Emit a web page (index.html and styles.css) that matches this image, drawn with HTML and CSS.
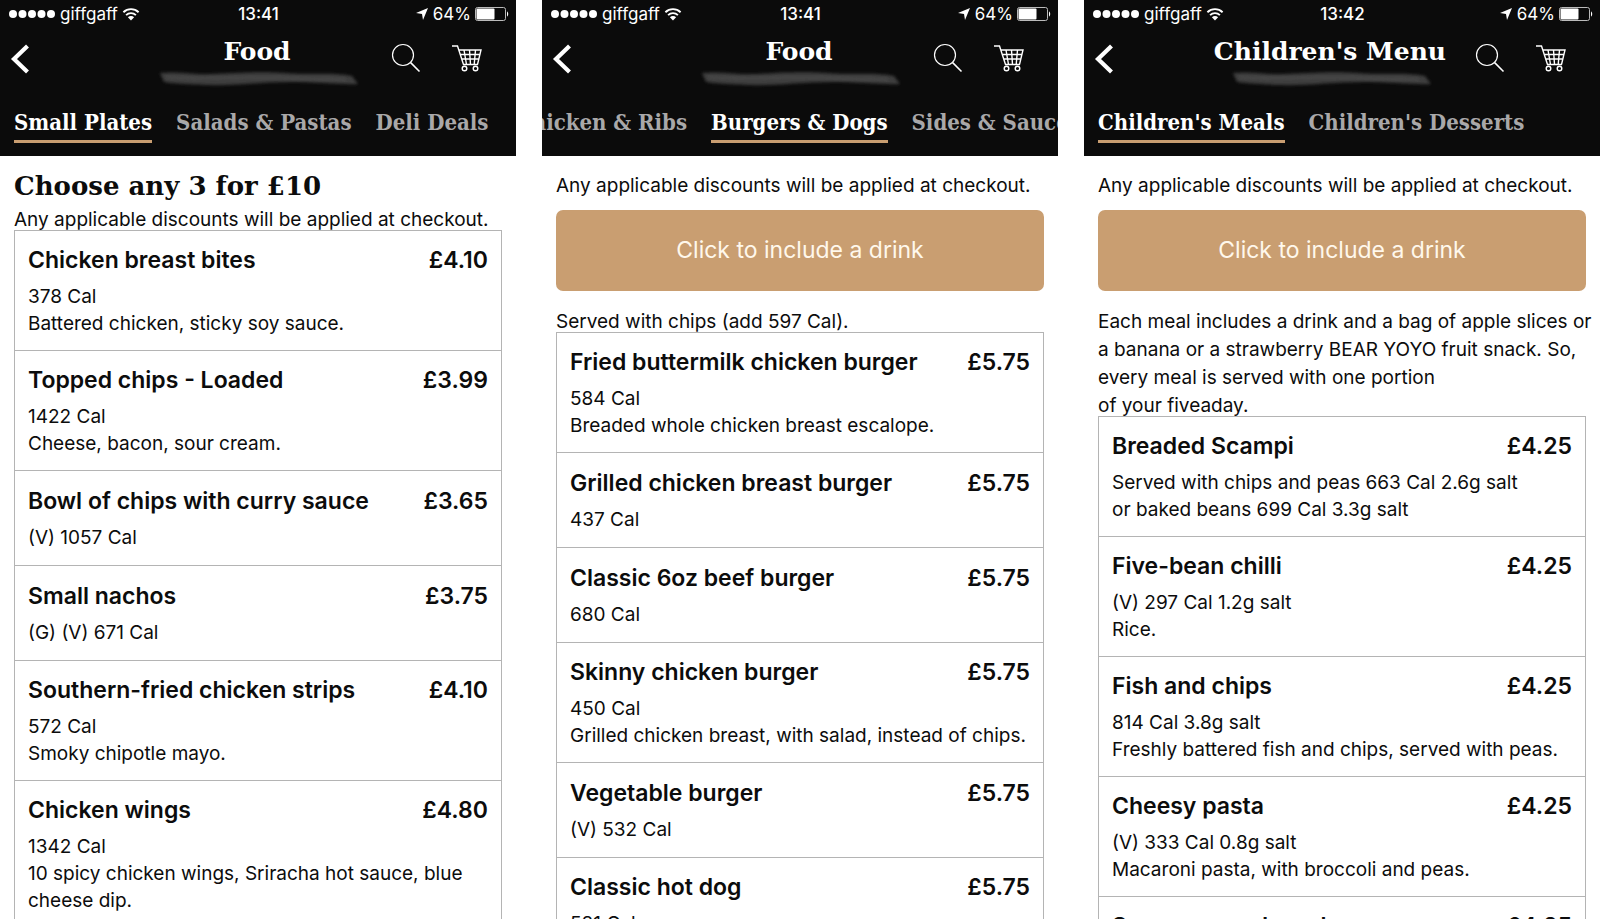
FILE: index.html
```html
<!DOCTYPE html>
<html lang="en">
<head>
    <meta charset="UTF-8">
    <meta name="viewport" content="width=device-width, initial-scale=1">
    <title>Food menu</title>
    <link rel="stylesheet" href="styles.css">
</head>
<body>
<svg class="sprite" aria-hidden="true">
    <symbol id="icon-signal" viewBox="0 0 48 10">
        <circle cx="5" cy="5" r="4"/><circle cx="14.5" cy="5" r="4"/><circle cx="24" cy="5" r="4"/><circle cx="33.5" cy="5" r="4"/><circle cx="43" cy="5" r="4"/>
    </symbol>
    <symbol id="icon-wifi" viewBox="0 0 18 14">
        <path d="M1.4 5.2a11 11 0 0 1 15.2 0M4.1 8.1a7 7 0 0 1 9.8 0" fill="none" stroke="currentColor" stroke-width="1.9"/>
        <path d="M9 13.4 5.9 10.2a4.4 4.4 0 0 1 6.2 0z"/>
    </symbol>
    <symbol id="icon-location" viewBox="0 0 14 14">
        <path d="M13 1 8 13 7 7 1 6z"/>
    </symbol>
    <symbol id="icon-battery" viewBox="0 0 34 14">
        <rect x=".5" y=".5" width="30" height="13" rx="2" fill="none" stroke="#bbb"/>
        <rect x="1.5" y="1.5" width="18" height="11" rx="1"/>
        <path d="M32 4.5c1.6.6 1.6 4.4 0 5z"/>
    </symbol>
    <symbol id="icon-back" viewBox="0 0 20 30">
        <path d="M17.5 2 4 15l13.5 13" fill="none" stroke="currentColor" stroke-width="4.2"/>
    </symbol>
    <symbol id="icon-search" viewBox="0 0 30 30">
        <circle cx="12" cy="12" r="10.5" fill="none" stroke="currentColor" stroke-width="1.2"/>
        <path d="M19.4 19.4 28.5 28.5" fill="none" stroke="currentColor" stroke-width="1.6"/>
    </symbol>
    <symbol id="icon-cart" viewBox="0 0 32 28">
        <path d="M1 2h5.500l6 18.500h14.500M7.700 6H30l-3.500 14.500M9.200 10.500H29M10.700 15H28M13 6l2.500 14.500M18.500 6l1 14.500M24.500 6l-1.300 14.500" fill="none" stroke="currentColor" stroke-width="1.4"/>
        <circle cx="13.5" cy="24.5" r="2.3" fill="none" stroke="currentColor" stroke-width="1.4"/>
        <circle cx="24.5" cy="24.5" r="2.3" fill="none" stroke="currentColor" stroke-width="1.4"/>
    </symbol>
    <symbol id="smudge" viewBox="0 0 210 22">
        <path d="M8 5c18-2 34 2 52 1s50-3 74-1 48-1 66 3l6 8c-14 1-42-2-68-2s-60 4-84 3-28-1-42-3z" fill="#3d3d3d" filter="url(#soft)"/>
        <path d="M14 9c40 4 80-1 120 1s46 0 60 2" fill="none" stroke="#4c4c4c" stroke-width="2" filter="url(#soft)"/>
    </symbol>
    <filter id="soft" x="-10%" y="-50%" width="120%" height="200%"><feGaussianBlur stdDeviation="1.8"/></filter>
</svg>

<main class="screens">
    <section class="screen">
        <header class="header">
            <div class="status">
                <div class="status-left">
                    <svg class="signal"><use href="#icon-signal"/></svg>
                    <span>giffgaff</span>
                    <svg class="wifi"><use href="#icon-wifi"/></svg>
                </div>
                <time class="clock">13:41</time>
                <div class="status-right">
                    <svg class="location"><use href="#icon-location"/></svg>
                    <span>64%</span>
                    <svg class="battery"><use href="#icon-battery"/></svg>
                </div>
            </div>
            <div class="navbar">
                <button class="icon-btn" aria-label="Back"><svg class="back"><use href="#icon-back"/></svg></button>
                <div class="title">
                    <h1>Food</h1>
                    <svg class="smudge"><use href="#smudge"/></svg>
                </div>
                <div class="actions">
                    <button class="icon-btn" aria-label="Search"><svg class="search"><use href="#icon-search"/></svg></button>
                    <button class="icon-btn" aria-label="Basket"><svg class="cart"><use href="#icon-cart"/></svg></button>
                </div>
            </div>
            <nav class="tabs">
                <a class="tab active" href="#small-plates">Small Plates</a>
                <a class="tab" href="#salads">Salads &amp; Pastas</a>
                <a class="tab" href="#deli">Deli Deals</a>
            </nav>
        </header>
        <div class="content">
            <h2>Choose any 3 for £10</h2>
            <p class="note">Any applicable discounts will be applied at checkout.</p>
            <ul class="menu">
                <li class="item">
                    <div class="item-top"><h3>Chicken breast bites</h3><span class="price">£4.10</span></div>
                    <p>378 Cal<br>Battered chicken, sticky soy sauce.</p>
                </li>
                <li class="item">
                    <div class="item-top"><h3>Topped chips - Loaded</h3><span class="price">£3.99</span></div>
                    <p>1422 Cal<br>Cheese, bacon, sour cream.</p>
                </li>
                <li class="item">
                    <div class="item-top"><h3>Bowl of chips with curry sauce</h3><span class="price">£3.65</span></div>
                    <p>(V) 1057 Cal</p>
                </li>
                <li class="item">
                    <div class="item-top"><h3>Small nachos</h3><span class="price">£3.75</span></div>
                    <p>(G) (V) 671 Cal</p>
                </li>
                <li class="item">
                    <div class="item-top"><h3>Southern-fried chicken strips</h3><span class="price">£4.10</span></div>
                    <p>572 Cal<br>Smoky chipotle mayo.</p>
                </li>
                <li class="item">
                    <div class="item-top"><h3>Chicken wings</h3><span class="price">£4.80</span></div>
                    <p>1342 Cal<br>10 spicy chicken wings, Sriracha hot sauce, blue cheese dip.</p>
                </li>
            </ul>
        </div>
    </section>

    <section class="screen">
        <header class="header">
            <div class="status">
                <div class="status-left">
                    <svg class="signal"><use href="#icon-signal"/></svg>
                    <span>giffgaff</span>
                    <svg class="wifi"><use href="#icon-wifi"/></svg>
                </div>
                <time class="clock">13:41</time>
                <div class="status-right">
                    <svg class="location"><use href="#icon-location"/></svg>
                    <span>64%</span>
                    <svg class="battery"><use href="#icon-battery"/></svg>
                </div>
            </div>
            <div class="navbar">
                <button class="icon-btn" aria-label="Back"><svg class="back"><use href="#icon-back"/></svg></button>
                <div class="title">
                    <h1>Food</h1>
                    <svg class="smudge"><use href="#smudge"/></svg>
                </div>
                <div class="actions">
                    <button class="icon-btn" aria-label="Search"><svg class="search"><use href="#icon-search"/></svg></button>
                    <button class="icon-btn" aria-label="Basket"><svg class="cart"><use href="#icon-cart"/></svg></button>
                </div>
            </div>
            <nav class="tabs">
                <a class="tab" href="#chicken">Chicken &amp; Ribs</a>
                <a class="tab active" href="#burgers">Burgers &amp; Dogs</a>
                <a class="tab" href="#sides">Sides &amp; Sauces</a>
            </nav>
        </header>
        <div class="content">
            <p class="note">Any applicable discounts will be applied at checkout.</p>
            <button class="drink-btn">Click to include a drink</button>
            <p class="note">Served with chips (add 597 Cal).</p>
            <ul class="menu">
                <li class="item">
                    <div class="item-top"><h3>Fried buttermilk chicken burger</h3><span class="price">£5.75</span></div>
                    <p>584 Cal<br>Breaded whole chicken breast escalope.</p>
                </li>
                <li class="item">
                    <div class="item-top"><h3>Grilled chicken breast burger</h3><span class="price">£5.75</span></div>
                    <p>437 Cal</p>
                </li>
                <li class="item">
                    <div class="item-top"><h3>Classic 6oz beef burger</h3><span class="price">£5.75</span></div>
                    <p>680 Cal</p>
                </li>
                <li class="item">
                    <div class="item-top"><h3>Skinny chicken burger</h3><span class="price">£5.75</span></div>
                    <p>450 Cal<br>Grilled chicken breast, with salad, instead of chips.</p>
                </li>
                <li class="item">
                    <div class="item-top"><h3>Vegetable burger</h3><span class="price">£5.75</span></div>
                    <p>(V) 532 Cal</p>
                </li>
                <li class="item">
                    <div class="item-top"><h3>Classic hot dog</h3><span class="price">£5.75</span></div>
                    <p>581 Cal</p>
                </li>
            </ul>
        </div>
    </section>

    <section class="screen">
        <header class="header">
            <div class="status">
                <div class="status-left">
                    <svg class="signal"><use href="#icon-signal"/></svg>
                    <span>giffgaff</span>
                    <svg class="wifi"><use href="#icon-wifi"/></svg>
                </div>
                <time class="clock">13:42</time>
                <div class="status-right">
                    <svg class="location"><use href="#icon-location"/></svg>
                    <span>64%</span>
                    <svg class="battery"><use href="#icon-battery"/></svg>
                </div>
            </div>
            <div class="navbar">
                <button class="icon-btn" aria-label="Back"><svg class="back"><use href="#icon-back"/></svg></button>
                <div class="title">
                    <h1>Children's Menu</h1>
                    <svg class="smudge"><use href="#smudge"/></svg>
                </div>
                <div class="actions">
                    <button class="icon-btn" aria-label="Search"><svg class="search"><use href="#icon-search"/></svg></button>
                    <button class="icon-btn" aria-label="Basket"><svg class="cart"><use href="#icon-cart"/></svg></button>
                </div>
            </div>
            <nav class="tabs">
                <a class="tab active" href="#meals">Children's Meals</a>
                <a class="tab" href="#desserts">Children's Desserts</a>
            </nav>
        </header>
        <div class="content">
            <p class="note">Any applicable discounts will be applied at checkout.</p>
            <button class="drink-btn">Click to include a drink</button>
            <p class="note">Each meal includes a drink and a bag of apple slices or a banana or a strawberry BEAR YOYO fruit snack. So, every meal is served with one portion<br>of your fiveaday.</p>
            <ul class="menu">
                <li class="item">
                    <div class="item-top"><h3>Breaded Scampi</h3><span class="price">£4.25</span></div>
                    <p>Served with chips and peas 663 Cal 2.6g salt<br>or baked beans 699 Cal 3.3g salt</p>
                </li>
                <li class="item">
                    <div class="item-top"><h3>Five-bean chilli</h3><span class="price">£4.25</span></div>
                    <p>(V) 297 Cal 1.2g salt<br>Rice.</p>
                </li>
                <li class="item">
                    <div class="item-top"><h3>Fish and chips</h3><span class="price">£4.25</span></div>
                    <p>814 Cal 3.8g salt<br>Freshly battered fish and chips, served with peas.</p>
                </li>
                <li class="item">
                    <div class="item-top"><h3>Cheesy pasta</h3><span class="price">£4.25</span></div>
                    <p>(V) 333 Cal 0.8g salt<br>Macaroni pasta, with broccoli and peas.</p>
                </li>
                <li class="item">
                    <div class="item-top"><h3>Sausages and mash</h3><span class="price">£4.25</span></div>
                </li>
            </ul>
        </div>
    </section>
</main>
<script>
// bring the selected tab to the middle of its strip
document.querySelectorAll(".tabs").forEach(tabs => {
    const tab = tabs.querySelector(".active");
    const left = tab.getBoundingClientRect().left - tabs.getBoundingClientRect().left;
    tabs.scrollLeft = left - (tabs.clientWidth - tab.offsetWidth) / 2;
});
</script>
</body>
</html>
```
FILE: styles.css
```css
* { box-sizing: border-box; }
body {
    margin: 0;
    background: #fff;
    color: #0c0c0c;
    font-family: Inter, "Liberation Sans", sans-serif;
    font-size: 19px;
    line-height: 27px;
}
h1, h2, h3, p, ul {
    margin: 0;
    padding: 0;
}
svg {
    display: block;
    fill: currentColor;
}
button {
    font-family: inherit;
    border: none;
    cursor: pointer;
}
.sprite {
    position: absolute;
    width: 0;
    height: 0;
}
.screens {
    display: grid;
    grid-template-columns: repeat(3, minmax(0, 1fr));
    gap: 26px;
    height: 100vh;
    overflow: hidden;
}

/* header */
.header {
    background: #0b0b0b;
    color: #fff;
    padding-bottom: 13px;
}
.status {
    display: grid;
    grid-template-columns: 1fr auto 1fr;
    align-items: center;
    height: 28px;
    padding: 0 7px 0 8px;
    font-size: 17px;
}
.status-left, .status-right {
    display: flex;
    align-items: center;
    gap: 4px;
}
.status-right { justify-content: flex-end; }
.clock { font-weight: 500; }
.signal { width: 48px; height: 10px; }
.wifi { width: 18px; height: 14px; }
.location { width: 14px; height: 14px; }
.battery { width: 34px; height: 14px; }
.navbar {
    display: grid;
    grid-template-columns: 1fr auto 1fr;
    align-items: center;
    height: 60px;
    padding: 0 10px;
}
.icon-btn {
    background: none;
    color: #fff;
    padding: 0;
    justify-self: start;
}
.back { width: 20px; height: 30px; }
.search { width: 30px; height: 30px; }
.cart { width: 32px; height: 28px; }
.title {
    display: flex;
    flex-direction: column;
    align-items: center;
    padding-top: 8px;
}
.title h1 {
    font-family: "DejaVu Serif", serif;
    font-size: 25px;
    line-height: 32px;
    white-space: nowrap;
}
.smudge { width: 210px; height: 22px; }
.actions {
    display: flex;
    align-items: center;
    justify-content: flex-end;
    gap: 30px;
    padding: 0 23px 2px 29px;
}
.tabs {
    display: flex;
    gap: 24px;
    padding: 20px 14px 0;
    overflow-x: auto;
    scrollbar-width: none;
}
.tab {
    flex: none;
    padding-bottom: 4px;
    border-bottom: 3px solid transparent;
    color: #a9a8a9;
    font-family: "DejaVu Serif Condensed", "DejaVu Serif", serif;
    font-size: 22px;
    font-weight: bold;
    line-height: 28px;
    text-decoration: none;
    white-space: nowrap;
}
.tab.active {
    color: #fff;
    border-bottom-color: #c99e71;
}

/* menu */
.content { padding: 16px 14px; }
.content h2 {
    margin-bottom: 6px;
    font-family: "DejaVu Serif", serif;
    font-size: 26px;
    line-height: 28px;
}
.note {
    margin: 0 -6px -4px 0;
    line-height: 28px;
}
.drink-btn {
    display: block;
    width: 100%;
    margin: 14px 0 17px;
    padding: 26px;
    border-radius: 7px;
    background: #c99e71;
    color: #fff8ec;
    font-size: 23px;
    line-height: 29px;
}
.menu {
    list-style: none;
    border: 1px solid #b4b4b4;
}
.item {
    display: flex;
    flex-direction: column;
    justify-content: center;
    min-height: 95px;
    padding: 13px;
}
.item + .item { border-top: 1px solid #b4b4b4; }
/* the last row runs off the bottom of the screen */
.item:last-child {
    min-height: 120px;
    justify-content: flex-start;
}
.item-top {
    display: flex;
    justify-content: space-between;
    margin-bottom: 7px;
}
.item h3, .price {
    font-size: 23px;
    font-weight: 600;
    line-height: 32px;
}
```
